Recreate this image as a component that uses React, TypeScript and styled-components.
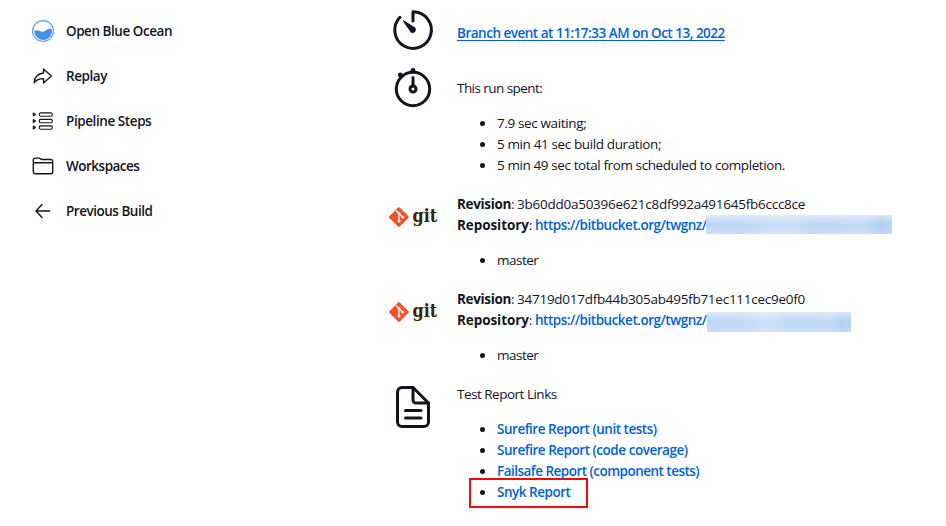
import React from "react";
import styled, { createGlobalStyle } from "styled-components";

const GlobalStyle = createGlobalStyle`
  *, *::before, *::after { box-sizing: border-box; }
  body {
    margin: 0;
    background: #fff;
    color: #14141f;
    font: 400 13.5px/21px "Open Sans", "Noto Sans", sans-serif;
    overflow: hidden;
  }
`;

const Page = styled.div`
  display: flex;
  width: 946px;
  height: 526px;
  overflow: hidden;
`;

const Sidebar = styled.nav`
  display: flex;
  flex-direction: column;
  width: 389px;
  padding: 9px 0 0 31px;
`;

const Task = styled.a<{ $track: number }>`
  display: flex;
  align-items: center;
  gap: 11px;
  height: 45px;
  font-weight: 600;
  letter-spacing: ${(p) => p.$track}px;
  white-space: nowrap;

  svg { flex: none; margin-bottom: 2px; }
`;

const Main = styled.main`
  flex: 1;
  display: flex;
  flex-direction: column;
`;

const Entry = styled.section<{ $gap?: number }>`
  display: grid;
  grid-template-columns: 48px 1fr;
  column-gap: 20px;
  align-items: start;
  margin-top: ${(p) => p.$gap ?? 18}px;
`;

const IconCell = styled.div<{ $drop?: number }>`
  height: 48px;
  margin: ${(p) => p.$drop ?? 0}px 0 -48px;

  svg { display: block; overflow: visible; }
`;

const Line = styled.div`
  height: 21px;
  white-space: nowrap;
`;

const RepoLine = styled(Line)`
  display: flex;
`;

const Txt = styled.span<{ $track: number }>`
  letter-spacing: ${(p) => p.$track}px;
`;

const Strong = styled(Txt)`
  font-weight: 700;
`;

const Link = styled(Txt).attrs({ as: "a" })<{ $underline?: boolean }>`
  color: #0062d9;
  font-weight: 600;
  text-decoration: ${(p) => (p.$underline ? "underline" : "none")};
  text-decoration-thickness: 1px;
  text-underline-offset: 2px;
`;

const Label = styled.span<{ $width: number }>`
  display: inline-block;
  width: ${(p) => p.$width}px;
`;

const List = styled.ul`
  list-style: none;
  margin: 14px 0 0;
  padding: 0;
`;

const Item = styled.li<{ $marked?: boolean }>`
  display: flex;
  align-items: center;
  height: ${(p) => (p.$marked ? 30 : 21)}px;
  width: ${(p) => (p.$marked ? "119px" : "auto")};
  margin: ${(p) => (p.$marked ? "-4px 0 0 12px" : "0")};
  padding: ${(p) => (p.$marked ? "0 0 2px 9px" : "0 0 0 23px")};
  border: ${(p) => (p.$marked ? "2px solid #f50a0f" : "0")};
  white-space: nowrap;

  &::before {
    content: "";
    flex: none;
    width: 5px;
    height: 5px;
    margin-right: 12px;
    border-radius: 50%;
    background: #14141f;
  }
`;

const Redacted = styled.span<{ $width: number; $top: number; $left: number; $height: number }>`
  width: ${(p) => p.$width}px;
  height: ${(p) => p.$height}px;
  margin: ${(p) => p.$top}px 0 0 ${(p) => p.$left}px;
  background:
    linear-gradient(#ffffff80, #ffffff10 40%, #ffffff00 60%, #ffffff30),
    linear-gradient(90deg, #bdd6f5, #c1d8f6 25%, #cddff7 42%, #bdd6f5 60%, #c3d9f5 85%, #b0cff3 94%, #bbd5f4);
`;

const stroke = {
  fill: "none",
  stroke: "currentColor",
  strokeLinecap: "round" as const,
  strokeLinejoin: "round" as const,
};

const OceanIcon = () => (
  <svg width="24" height="24" viewBox="0 0 24 24">
    <circle cx="12" cy="12" r="10.4" fill="#fff" stroke="#62a5ee" strokeWidth="1.3" />
    <path d="M3.2 12.2C5 10.800 7 11 8.800 12c2 1.200 4 1 6-.6 1.800-1.500 3.900-2 6-1.200A9 9 0 0 1 12 21 9 9 0 0 1 3.200 12.200Z" fill="#4a90e2" />
  </svg>
);

const ReplayIcon = () => (
  <svg width="24" height="24" viewBox="0 0 24 24" {...stroke} strokeWidth="1.4">
    <path d="M12.500 5 20.500 12l-8 7v-4.400c-4.300-.1-6.800.9-9.300 4.200.2-5.600 3.800-9.200 9.300-9.800Z" />
  </svg>
);

const StepsIcon = () => (
  <svg width="24" height="24" viewBox="0 0 24 24" {...stroke} strokeWidth="1.15">
    {[5.5, 12, 18.5].map((y) => (
      <g key={y}>
        <path d={`M2.3 ${y - 1.5} 4.5 ${y}l-2.2 1.5Z`} />
        <rect x="8.3" y={y - 1.7} width="13" height="3.4" rx="1.5" />
      </g>
    ))}
  </svg>
);

const FolderIcon = () => (
  <svg width="24" height="24" viewBox="0 0 24 24" {...stroke} strokeWidth="1.4">
    <path d="M2.300 8.700V6a1.900 1.900 0 0 1 1.900-1.900h3.600c.8 0 1.200.2 1.700.7.500.5.900.7 1.700.7h8.600a1.900 1.900 0 0 1 1.900 1.900v10.400a1.900 1.900 0 0 1-1.900 1.900H4.200a1.900 1.900 0 0 1-1.900-1.900V8.700h19.400" />
  </svg>
);

const BackIcon = () => (
  <svg width="24" height="24" viewBox="0 0 24 24" {...stroke} strokeWidth="1.4">
    <path d="M11 5.500 5 12l6 6.500M5.200 12H18.700" />
  </svg>
);

const TimerIcon = () => (
  <svg width="48" height="48" viewBox="0 0 48 48" {...stroke} strokeWidth="3">
    <path d="M24 15V5.800A18.300 18.300 0 1 1 11 11.300" />
    <path d="M14.500 15 25.500 21.800a2.600 2.600 0 1 1-3.700 3.700Z" fill="currentColor" strokeWidth="1.2" />
  </svg>
);

const StopwatchIcon = () => (
  <svg width="48" height="48" viewBox="0 0 48 48" {...stroke} strokeWidth="3">
    <circle cx="24" cy="25" r="16.7" />
    <circle cx="24" cy="25" r="3" />
    <path d="M24 21.500v-8" />
    <circle cx="24" cy="6.5" r="2.4" fill="currentColor" stroke="none" />
    <circle cx="11.3" cy="11" r="2.4" fill="currentColor" stroke="none" />
  </svg>
);

const DocumentIcon = () => (
  <svg width="48" height="48" viewBox="0 0 48 48" {...stroke} strokeWidth="3">
    <path d="M24 4.500h-11a4.500 4.500 0 0 0-4.500 4.500v30a4.500 4.500 0 0 0 4.500 4.500h22a4.500 4.500 0 0 0 4.500-4.500V20Z" />
    <path d="M24 4.500V17a3 3 0 0 0 3 3h12.500M16.500 27.500h15.500M16.500 35h15.500" />
  </svg>
);

const GitMark = styled.text`
  font: 700 19px "DejaVu Serif", serif;
  fill: #362701;
`;

const GitLogo = () => (
  <svg width="48" height="48" viewBox="0 0 48 48">
    <rect x="2.6" y="16.8" width="14.6" height="14.6" rx="1.2" fill="#f34f29" transform="rotate(45 9.9 24.1)" />
    <path d="M7 17.500 10 20.500V28M10 20.500l3.500 3.500" fill="none" stroke="#fff" strokeWidth="1.2" />
    <g fill="#fff">
      <circle cx="10" cy="20.5" r="1.4" />
      <circle cx="10" cy="28" r="1.5" />
      <circle cx="13.7" cy="24.2" r="1.4" />
    </g>
    <GitMark x="23.6" y="29.4" textLength="24.6" lengthAdjust="spacingAndGlyphs">git</GitMark>
  </svg>
);

const tasks = [
  { label: "Open Blue Ocean", track: -0.46, Icon: OceanIcon },
  { label: "Replay", track: -0.45, Icon: ReplayIcon },
  { label: "Pipeline Steps", track: -0.42, Icon: StepsIcon },
  { label: "Workspaces", track: -0.5, Icon: FolderIcon },
  { label: "Previous Build", track: -0.48, Icon: BackIcon },
];

const timings = [
  { text: "7.9 sec waiting;", track: -0.37 },
  { text: "5 min 41 sec build duration;", track: -0.38 },
  { text: "5 min 49 sec total from scheduled to completion.", track: -0.4 },
];

const revisions = [
  { hash: "3b60dd0a50396e621c8df992a491645fb6ccc8ce", width: 186, top: 0, left: -1, height: 19 },
  { hash: "34719d017dfb44b305ab495fb71ec111cec9e0f0", width: 144, top: 2, left: 0, height: 20 },
];

const reports = [
  { text: "Surefire Report (unit tests)", track: -0.48 },
  { text: "Surefire Report (code coverage)", track: -0.47 },
  { text: "Failsafe Report (component tests)", track: -0.52 },
  { text: "Snyk Report", track: -0.48, marked: true },
];

export default function App() {
  return (
    <Page>
      <GlobalStyle />
      <Sidebar>
        {tasks.map(({ label, track, Icon }) => (
          <Task key={label} $track={track}>
            <Icon />
            {label}
          </Task>
        ))}
      </Sidebar>
      <Main>
        <Entry $gap={23}>
          <IconCell $drop={-17}><TimerIcon /></IconCell>
          <Line>
            <Link $track={-0.49} $underline>Branch event at 11:17:33 AM on Oct 13, 2022</Link>
          </Line>
        </Entry>
        <Entry $gap={34}>
          <IconCell $drop={-14}><StopwatchIcon /></IconCell>
          <div>
            <Line><Txt $track={-0.55}>This run spent:</Txt></Line>
            <List>
              {timings.map((t) => (
                <Item key={t.text}><Txt $track={t.track}>{t.text}</Txt></Item>
              ))}
            </List>
          </div>
        </Entry>
        {revisions.map((r) => (
          <Entry key={r.hash}>
            <IconCell $drop={-1}><GitLogo /></IconCell>
            <div>
              <Line>
                <Label $width={60}><Strong $track={-0.35}>Revision</Strong>:</Label>
                <Txt $track={-0.25}>{r.hash}</Txt>
              </Line>
              <RepoLine>
                <Label $width={78}><Strong $track={-0.08}>Repository</Strong>:</Label>
                <Link $track={-0.485}>https://bitbucket.org/twgnz/</Link>
                <Redacted $width={r.width} $top={r.top} $left={r.left} $height={r.height} />
              </RepoLine>
              <List>
                <Item><Txt $track={-0.5}>master</Txt></Item>
              </List>
            </div>
          </Entry>
        ))}
        <Entry>
          <IconCell $drop={-1}><DocumentIcon /></IconCell>
          <div>
            <Line><Txt $track={-0.5}>Test Report Links</Txt></Line>
            <List>
              {reports.map((r) => (
                <Item key={r.text} $marked={r.marked}>
                  <Link $track={r.track}>{r.text}</Link>
                </Item>
              ))}
            </List>
          </div>
        </Entry>
      </Main>
    </Page>
  );
}
